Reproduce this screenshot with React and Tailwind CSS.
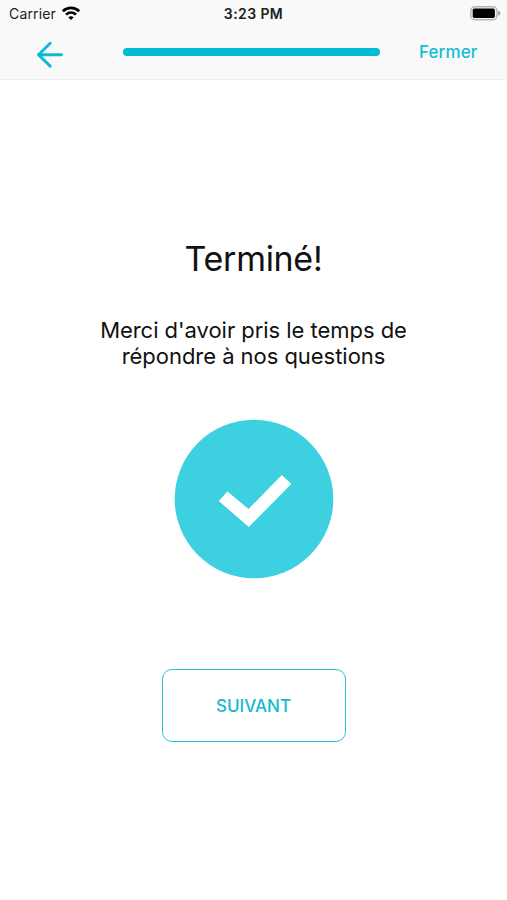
function WifiIcon() {
  return (
    <svg className="mb-[2px] ml-[4px] h-[14px] w-[20px]" viewBox="0 0 20 14" fill="none" stroke="#000" strokeWidth="2.6">
      <path d="M1.8 5.2C6.5.7 13.5.7 18.2 5.2" />
      <path d="M5 8.6c2.9-2.7 7.1-2.7 10 0" />
      <path d="M7.3 11.2c1.7-1.4 3.7-1.4 5.4 0L10 13.9z" fill="#000" stroke="none" />
    </svg>
  );
}

function BatteryIcon() {
  return (
    <svg className="mb-[2px] h-[15px] w-[31px]" viewBox="0 0 31 15">
      <rect x=".8" y=".8" width="26.2" height="13" rx="4" fill="#f4f4f4" stroke="#b5b5b5" strokeWidth="1.4" />
      <rect x="2.7" y="2.5" width="22.2" height="9.5" rx="1.8" fill="#000" />
      <path d="M28.2 4.8c3 .9 3 4.1 0 5z" fill="#a0a0a0" />
    </svg>
  );
}

function StatusBar() {
  return (
    <div className="grid h-[28px] grid-cols-3 items-center text-[14px] leading-[28px] text-[#202020]">
      <div className="flex items-center pl-[9px]">
        <span className="w-[48px] whitespace-nowrap tracking-[0.15px]">Carrier</span>
        <WifiIcon />
      </div>
      <div className="text-center font-semibold tracking-[0.4px]">3:23 PM</div>
      <div className="flex justify-end pr-[6px]">
        <BatteryIcon />
      </div>
    </div>
  );
}

export default function App() {
  return (
    <div className="flex h-[900px] w-[507px] flex-col overflow-hidden bg-white font-['Inter','Liberation_Sans',sans-serif]">
      <header className="h-[80px] shrink-0 border-b border-[#efefef] bg-[#f9f9f9]">
        <StatusBar />
        <nav className="flex h-[50px] items-start pl-[36px]">
          <button aria-label="Retour" className="mt-[13px] h-[27px] w-[28px]">
            <svg viewBox="0 0 28 27" className="h-[27px] w-[28px]" fill="none" stroke="#08bcd4" strokeWidth="2.9" strokeLinecap="round" strokeLinejoin="round">
              <path d="M25.5 13.7H2.5M14.2 2.3 2.5 13.7l11.7 11.4" />
            </svg>
          </button>
          <div className="mt-[20px] ml-[59px] h-[8px] w-[257px] rounded-full bg-[#00bbd4]" />
          <button className="mt-[12px] ml-[39px] text-[17px] leading-[24px] font-medium tracking-[0.1px] text-[#16bdd5]">
            Fermer
          </button>
        </nav>
      </header>
      <main className="flex flex-col items-center text-center text-[#111]">
        <h1 className="mt-[159px] text-[34px] leading-[40px] tracking-[-0.3px]">Terminé!</h1>
        <p className="mt-[38px] text-[22px] leading-[26px] tracking-[-0.04px]">
          Merci d'avoir pris le temps de
          <br />
          répondre à nos questions
        </p>
        <svg className="mt-[50px] h-[160px] w-[160px]" viewBox="0 0 160 160">
          <circle cx="80" cy="80" r="79.3" fill="#3dd0e0" />
          <path d="M44.8 82 53.5 72.5l21 17.5 33.3-34 9.5 9-42.5 43z" fill="#fff" />
        </svg>
        <button className="mt-[90px] h-[73px] w-[184px] rounded-[10px] border border-[#28c3d6] text-[17px] leading-[24px] font-medium text-[#16b9d0]">
          SUIVANT
        </button>
      </main>
    </div>
  );
}
